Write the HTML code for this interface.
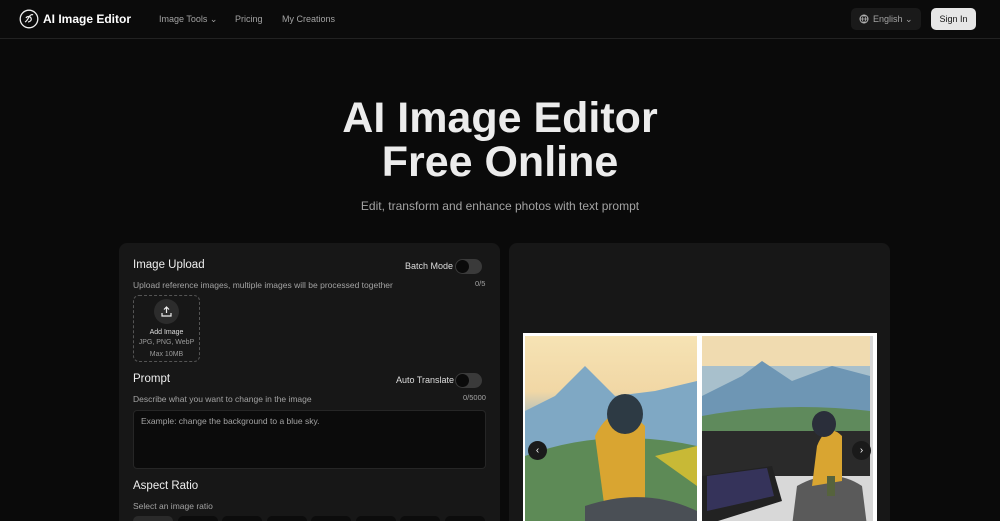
<!DOCTYPE html>
<html><head><meta charset="utf-8"><style>
*{box-sizing:border-box;margin:0;padding:0}
html,body{width:1000px;height:521px;overflow:hidden}
body{background:#0a0a0a;font-family:"Liberation Sans",sans-serif;color:#fff;position:relative}
.abs{position:absolute}
.nav{position:absolute;left:0;top:0;width:1000px;height:39px;border-bottom:1px solid #222;background:#0b0b0b}
.muted{color:#a3a3a3}
.toggle{position:absolute;width:27px;height:15px;border-radius:8px;background:#3a3a3a}
.toggle:after{content:"";position:absolute;left:1px;top:1px;width:13px;height:13px;border-radius:50%;background:#0a0a0a}
.ratio{position:absolute;top:516px;height:12px;width:40px;border-radius:5px;background:#0c0c0c}
</style></head><body>
<div class="nav">
 <svg class="abs" style="left:19px;top:9px" width="20" height="20" viewBox="0 0 20 20"><circle cx="10" cy="10" r="8.8" fill="none" stroke="#eee" stroke-width="1.3"/><path d="M6 13c2-1 3-3 4-5s3-3 4-2M7 9c1-2 4-2 5 0s-1 4-3 4" fill="none" stroke="#eee" stroke-width="1.2"/></svg>
 <div class="abs" style="left:43px;top:12px;font-size:12px;font-weight:bold">AI Image Editor</div>
 <div class="abs muted" style="left:159px;top:14px;font-size:9px">Image Tools ⌄</div>
 <div class="abs muted" style="left:235px;top:14px;font-size:9px">Pricing</div>
 <div class="abs muted" style="left:282px;top:14px;font-size:9px">My Creations</div>
 <div class="abs" style="left:851px;top:8px;width:70px;height:22px;border-radius:5px;background:#1a1a1a"></div>
 <svg class="abs" style="left:859px;top:14px" width="10" height="10" viewBox="0 0 10 10"><circle cx="5" cy="5" r="4" fill="none" stroke="#bbb"/><path d="M1 5h8M5 1c-2 2-2 6 0 8M5 1c2 2 2 6 0 8" fill="none" stroke="#bbb" stroke-width=".7"/></svg>
 <div class="abs muted" style="left:873px;top:14px;font-size:9px">English ⌄</div>
 <div class="abs" style="left:931px;top:8px;width:45px;height:22px;border-radius:5px;background:#e6e6e6;color:#111;font-size:9px;text-align:center;line-height:22px">Sign In</div>
</div>
<div class="abs" style="left:0;width:1000px;top:96px;text-align:center;font-size:43px;font-weight:bold;line-height:44px;color:#ececec">AI Image Editor<br>Free Online</div>
<div class="abs muted" style="left:0;width:1000px;top:199px;text-align:center;font-size:12px">Edit, transform and enhance photos with text prompt</div>

<div class="abs" style="left:119px;top:243px;width:381px;height:278px;border-radius:8px 8px 0 0;background:#171717"></div>
<div class="abs" style="left:133px;top:259px;font-size:11.5px;color:#eee">Image Upload</div>
<div class="abs" style="left:405px;top:261px;font-size:9px;color:#ddd">Batch Mode</div>
<div class="toggle" style="left:455px;top:259px"></div>
<div class="abs muted" style="left:133px;top:280px;font-size:8.5px">Upload reference images, multiple images will be processed together</div>
<div class="abs muted" style="left:475px;top:279px;font-size:7.5px">0/5</div>
<div class="abs" style="left:133px;top:295px;width:67px;height:67px;border:1px dashed #555;border-radius:6px"></div>
<div class="abs" style="left:154px;top:299px;width:25px;height:25px;border-radius:50%;background:#2c2c2c"></div>
<svg class="abs" style="left:160px;top:305px" width="13" height="13" viewBox="0 0 13 13"><path d="M6.5 8V2M4 4.5l2.5-2.5 2.5 2.5M2 8v3h9V8" fill="none" stroke="#eee" stroke-width="1.2"/></svg>
<div class="abs" style="left:133px;top:328px;width:67px;text-align:center;font-size:7px;color:#ddd;line-height:10px">Add Image<br><span style="color:#999">JPG, PNG, WebP</span><br><span style="color:#999;line-height:14px">Max 10MB</span></div>
<div class="abs" style="left:133px;top:373px;font-size:11.5px;color:#eee">Prompt</div>
<div class="abs" style="left:396px;top:375px;font-size:9px;color:#ddd">Auto Translate</div>
<div class="toggle" style="left:455px;top:373px"></div>
<div class="abs muted" style="left:133px;top:394px;font-size:8.5px">Describe what you want to change in the image</div>
<div class="abs muted" style="left:463px;top:393px;font-size:7.5px">0/5000</div>
<div class="abs" style="left:133px;top:410px;width:353px;height:59px;border-radius:4px;background:#0b0b0b;border:1px solid #262626"></div>
<div class="abs muted" style="left:141px;top:416px;font-size:8.5px">Example: change the background to a blue sky.</div>
<div class="abs" style="left:133px;top:480px;font-size:11.5px;color:#eee">Aspect Ratio</div>
<div class="abs muted" style="left:133px;top:501px;font-size:8.5px">Select an image ratio</div>
<div class="ratio" style="left:133px;background:#2a2a2a"></div><div class="ratio" style="left:178px"></div><div class="ratio" style="left:222px"></div><div class="ratio" style="left:267px"></div><div class="ratio" style="left:311px"></div><div class="ratio" style="left:356px"></div><div class="ratio" style="left:400px"></div><div class="ratio" style="left:445px"></div>

<div class="abs" style="left:509px;top:243px;width:381px;height:278px;border-radius:8px 8px 0 0;background:#171717"></div>
<div class="abs" style="left:523px;top:333px;width:354px;height:188px;background:#fff"></div>
<div class="abs" style="left:525px;top:336px;width:172px;height:185px;overflow:hidden;background:linear-gradient(#f6e3b4 0%,#f1d7a5 30%,#8fb3c8 50%,#6c9aa8 65%,#4e7a55 85%,#3b5c3a 100%)">
 <svg width="172" height="190"><path d="M0 75 L30 60 L60 30 L90 60 L130 55 L172 45 V190 H0Z" fill="#7fa8c4"/><path d="M0 120 Q80 90 172 110 V190 H0Z" fill="#5d8a56"/><path d="M70 100 Q90 60 120 90 L120 170 L80 175Z" fill="#d9a531"/><ellipse cx="100" cy="78" rx="18" ry="20" fill="#2d3a44"/><path d="M130 120 L172 110 V150 Z" fill="#c8b936"/><path d="M60 170 Q120 150 172 175 V190 H60Z" fill="#4a4f55"/></svg>
</div>
<div class="abs" style="left:702px;top:336px;width:171px;height:185px;overflow:hidden;background:#d8d8d8">
 <svg width="171" height="190"><rect x="0" y="0" width="168" height="95" fill="#a8c0cc"/><rect x="0" y="0" width="168" height="30" fill="#f0dbb0"/><path d="M0 60 L40 40 L60 25 L90 45 L130 30 L168 40 V95 H0Z" fill="#6e96b4"/><path d="M0 80 Q80 65 168 75 V95 H0Z" fill="#5f8a5c"/><rect x="0" y="95" width="168" height="45" fill="#2a2a2a"/><path d="M0 140 L70 130 L80 165 L0 190Z" fill="#222"/><path d="M5 140 L65 132 L72 160 L5 175Z" fill="#35335a"/><path d="M95 150 Q130 130 160 150 L165 190 H90Z" fill="#5a5a5a"/><path d="M115 110 Q125 85 140 100 L140 145 L110 150Z" fill="#d9a531"/><ellipse cx="122" cy="88" rx="12" ry="13" fill="#2a2e3a"/><rect x="125" y="140" width="8" height="20" fill="#56633d"/></svg>
</div>
<div class="abs" style="left:528px;top:441px;width:19px;height:19px;border-radius:50%;background:#1a1a1a;color:#fff;font-size:10px;text-align:center;line-height:19px">‹</div>
<div class="abs" style="left:852px;top:441px;width:19px;height:19px;border-radius:50%;background:#1a1a1a;color:#fff;font-size:10px;text-align:center;line-height:19px">›</div>
</body></html>
